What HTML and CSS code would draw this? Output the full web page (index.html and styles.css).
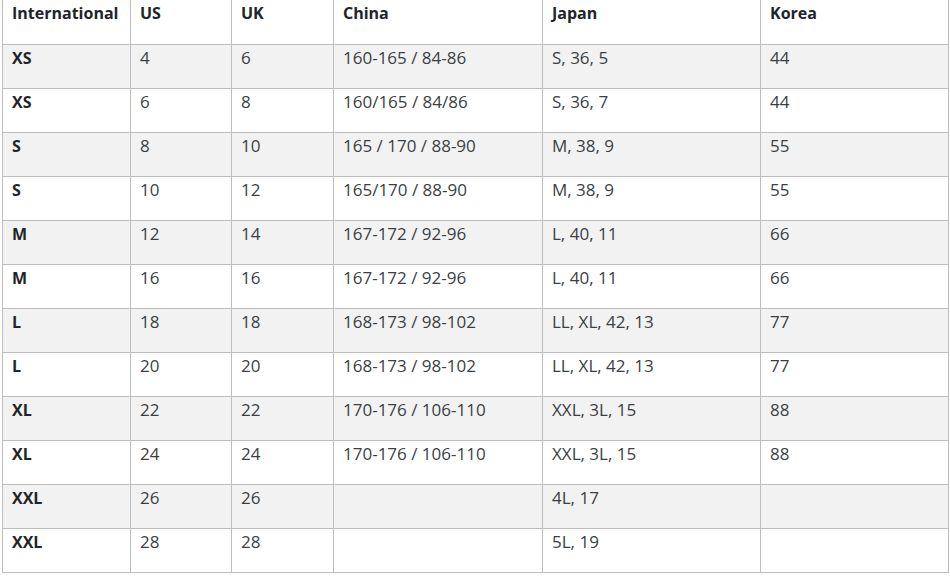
FILE: index.html
```html
<!DOCTYPE html>
<html>
<head>
<meta charset="utf-8">
<link rel="stylesheet" href="styles.css">
</head>
<body>
<table class="sizes">
  <colgroup>
    <col class="c1"><col class="c2"><col class="c3"><col class="c4"><col class="c5"><col class="c6">
  </colgroup>
  <thead>
    <tr><th>International</th><th>US</th><th>UK</th><th>China</th><th>Japan</th><th>Korea</th></tr>
  </thead>
  <tbody>
    <tr><th>XS</th><td>4</td><td>6</td><td>160-165 / 84-86</td><td>S, 36, 5</td><td>44</td></tr>
    <tr><th>XS</th><td>6</td><td>8</td><td>160/165 / 84/86</td><td>S, 36, 7</td><td>44</td></tr>
    <tr><th>S</th><td>8</td><td>10</td><td>165 / 170 / 88-90</td><td>M, 38, 9</td><td>55</td></tr>
    <tr><th>S</th><td>10</td><td>12</td><td>165/170 / 88-90</td><td>M, 38, 9</td><td>55</td></tr>
    <tr><th>M</th><td>12</td><td>14</td><td>167-172 / 92-96</td><td>L, 40, 11</td><td>66</td></tr>
    <tr><th>M</th><td>16</td><td>16</td><td>167-172 / 92-96</td><td>L, 40, 11</td><td>66</td></tr>
    <tr><th>L</th><td>18</td><td>18</td><td>168-173 / 98-102</td><td>LL, XL, 42, 13</td><td>77</td></tr>
    <tr><th>L</th><td>20</td><td>20</td><td>168-173 / 98-102</td><td>LL, XL, 42, 13</td><td>77</td></tr>
    <tr><th>XL</th><td>22</td><td>22</td><td>170-176 / 106-110</td><td>XXL, 3L, 15</td><td>88</td></tr>
    <tr><th>XL</th><td>24</td><td>24</td><td>170-176 / 106-110</td><td>XXL, 3L, 15</td><td>88</td></tr>
    <tr><th>XXL</th><td>26</td><td>26</td><td></td><td>4L, 17</td><td></td></tr>
    <tr><th>XXL</th><td>28</td><td>28</td><td></td><td>5L, 19</td><td></td></tr>
  </tbody>
</table>
</body>
</html>
```
FILE: styles.css
```css
html, body {
  margin: 0;
  padding: 0;
  background: #fff;
}
body {
  padding-left: 2px;
  font-family: "Open Sans", "Noto Sans", sans-serif;
  font-size: 16px;
  color: #212529;
}
.sizes {
  border-collapse: collapse;
  table-layout: fixed;
  width: 946px;
}
.c1 { width: 128px; }
.c2 { width: 101px; }
.c3 { width: 102px; }
.c4 { width: 209px; }
.c5 { width: 218px; }
.c6 { width: 188px; }
.sizes th,
.sizes td {
  border: 1px solid #bdbdbd;
  height: 44px;
  box-sizing: border-box;
  padding: 1px 9px 0;
  vertical-align: top;
  text-align: left;
  line-height: 24px;
}
.sizes thead th {
  border-top: none;
}
.sizes th {
  font-weight: 700;
  font-size: 16px;
}
.sizes td {
  font-weight: 400;
  font-size: 17px;
  color: #3a3f44;
}
.sizes tbody tr:nth-child(odd) {
  background: #f2f2f2;
}
```
